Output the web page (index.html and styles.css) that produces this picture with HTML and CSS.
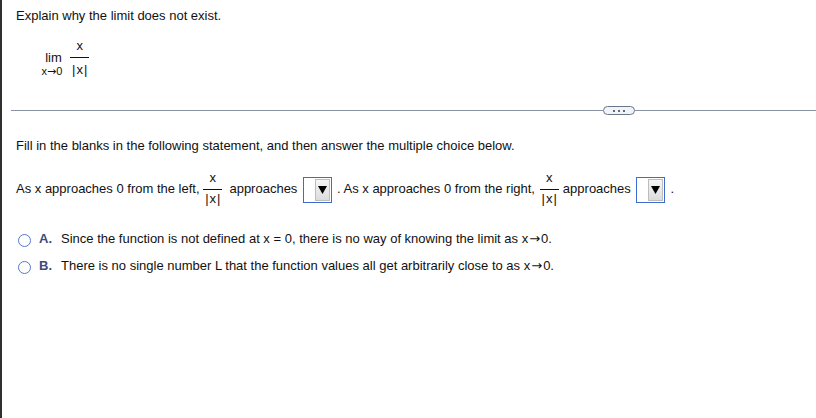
FILE: index.html
```
<!DOCTYPE html>
<html>
<head>
<meta charset="utf-8">
<link rel="stylesheet" href="styles.css">
</head>
<body>
<div class="page">
  <p class="prompt">Explain why the limit does not exist.</p>
  <div class="limit">
    <div class="lim-op"><span class="lim-word">lim</span><span class="lim-sub">x<span class="arr">→</span>0</span></div>
    <span class="frac frac-lg"><span class="num">x</span><span class="den">|x|</span></span>
  </div>
  <div class="sep">
    <span class="sep-line"></span>
    <span class="pill"><i></i><i></i><i></i></span>
    <span class="sep-line sep-right"></span>
  </div>
  <p class="instr">Fill in the blanks in the following statement, and then answer the multiple choice below.</p>
  <p class="fill">As x approaches 0 from the left, <span class="frac frac-in"><span class="num">x</span><span class="den">|x|</span></span>approaches <span class="select"><span class="select-btn"><svg width="9" height="8" viewBox="0 0 9 8"><polygon points="0,0 9,0 4.5,8" fill="#000"/></svg></span></span>. As x approaches 0 from the right, <span class="frac frac-in frac-r"><span class="num">x</span><span class="den">|x|</span></span>approaches <span class="select"><span class="select-btn"><svg width="9" height="8" viewBox="0 0 9 8"><polygon points="0,0 9,0 4.5,8" fill="#000"/></svg></span></span>.</p>
  <div class="options">
    <div class="option"><span class="radio"></span><span class="opt-label">A.</span><span class="opt-text">Since the function is not defined at x = 0, there is no way of knowing the limit as x<span class="arr">→</span>0.</span></div>
    <div class="option"><span class="radio"></span><span class="opt-label">B.</span><span class="opt-text">There is no single number L that the function values all get arbitrarily close to as x<span class="arr">→</span>0.</span></div>
  </div>
</div>
</body>
</html>
```
FILE: styles.css
```
html, body {
  margin: 0;
  padding: 0;
  background: #fff;
}
body {
  font-family: "Liberation Sans", Arial, sans-serif;
  font-size: 13px;
  color: #111;
}
.page {
  box-sizing: border-box;
  min-height: 418px;
  border-left: 2px solid #303030;
  padding: 8px 0 0 14px;
}
.prompt, .instr, .fill {
  margin: 0;
  line-height: 16px;
}
.arr {
  font-family: "DejaVu Sans", sans-serif;
  margin: 0 1px;
}
.limit {
  display: flex;
  align-items: flex-end;
  margin-top: 15px;
  margin-left: 24px;
  gap: 6px;
}
.lim-op {
  display: flex;
  flex-direction: column;
  align-items: center;
  width: 24px;
}
.lim-word {
  line-height: 13px;
  margin: 0 0 2px 3px;
}
.lim-sub {
  font-size: 11px;
  line-height: 11px;
  white-space: nowrap;
}
.lim-sub .arr {
  margin: 0;
}
.frac {
  display: inline-flex;
  flex-direction: column;
  text-align: center;
}
.num {
  line-height: 13px;
  padding: 0 2px 5px;
  border-bottom: 1px solid #111;
}
.den {
  line-height: 13px;
  padding: 2px 1px 3px 2px;
  letter-spacing: 1px;
}
.frac-lg .den {
  padding: 5px 1px 1px 2px;
}
.frac-in {
  vertical-align: middle;
  margin-right: 7px;
}
.frac-r {
  margin-left: 1px;
  margin-right: 4px;
}
.sep {
  display: flex;
  align-items: center;
  height: 9px;
  margin: 29px 0 0 -5px;
}
.sep-line {
  flex: 1;
  height: 1px;
  background: #8a93a3;
}
.sep-right {
  flex: 0 0 181px;
}
.pill {
  box-sizing: border-box;
  width: 32px;
  height: 9px;
  border: 1px solid #69768a;
  border-radius: 5px;
  background: #f1f3f6;
  display: flex;
  align-items: center;
  justify-content: center;
  gap: 3px;
}
.pill i {
  width: 2px;
  height: 2px;
  background: #5e6a7c;
}
.instr {
  margin-top: 23px;
}
.fill {
  margin-top: 17px;
}
.select {
  box-sizing: border-box;
  display: inline-flex;
  justify-content: flex-end;
  width: 29px;
  height: 26px;
  padding: 1px;
  border: 1px solid #3d6bd0;
  vertical-align: middle;
  margin: 0 5px 0 2px;
}
.select-btn {
  box-sizing: border-box;
  width: 15px;
  height: 22px;
  border: 1px solid #bdbdbd;
  background: linear-gradient(#f6f6f6, #dcdcdc);
  display: flex;
  align-items: center;
  justify-content: center;
}
.options {
  margin-top: 23px;
  display: flex;
  flex-direction: column;
  gap: 11px;
}
.option {
  display: flex;
  align-items: center;
  padding-left: 2px;
  line-height: 16px;
}
.radio {
  box-sizing: border-box;
  width: 13px;
  height: 13px;
  border: 1px solid #5479cc;
  border-radius: 50%;
  margin: 2px 8px 0 0;
  flex: none;
}
.opt-label {
  font-weight: bold;
  color: #3a4c7c;
  margin-right: 9px;
}
```
